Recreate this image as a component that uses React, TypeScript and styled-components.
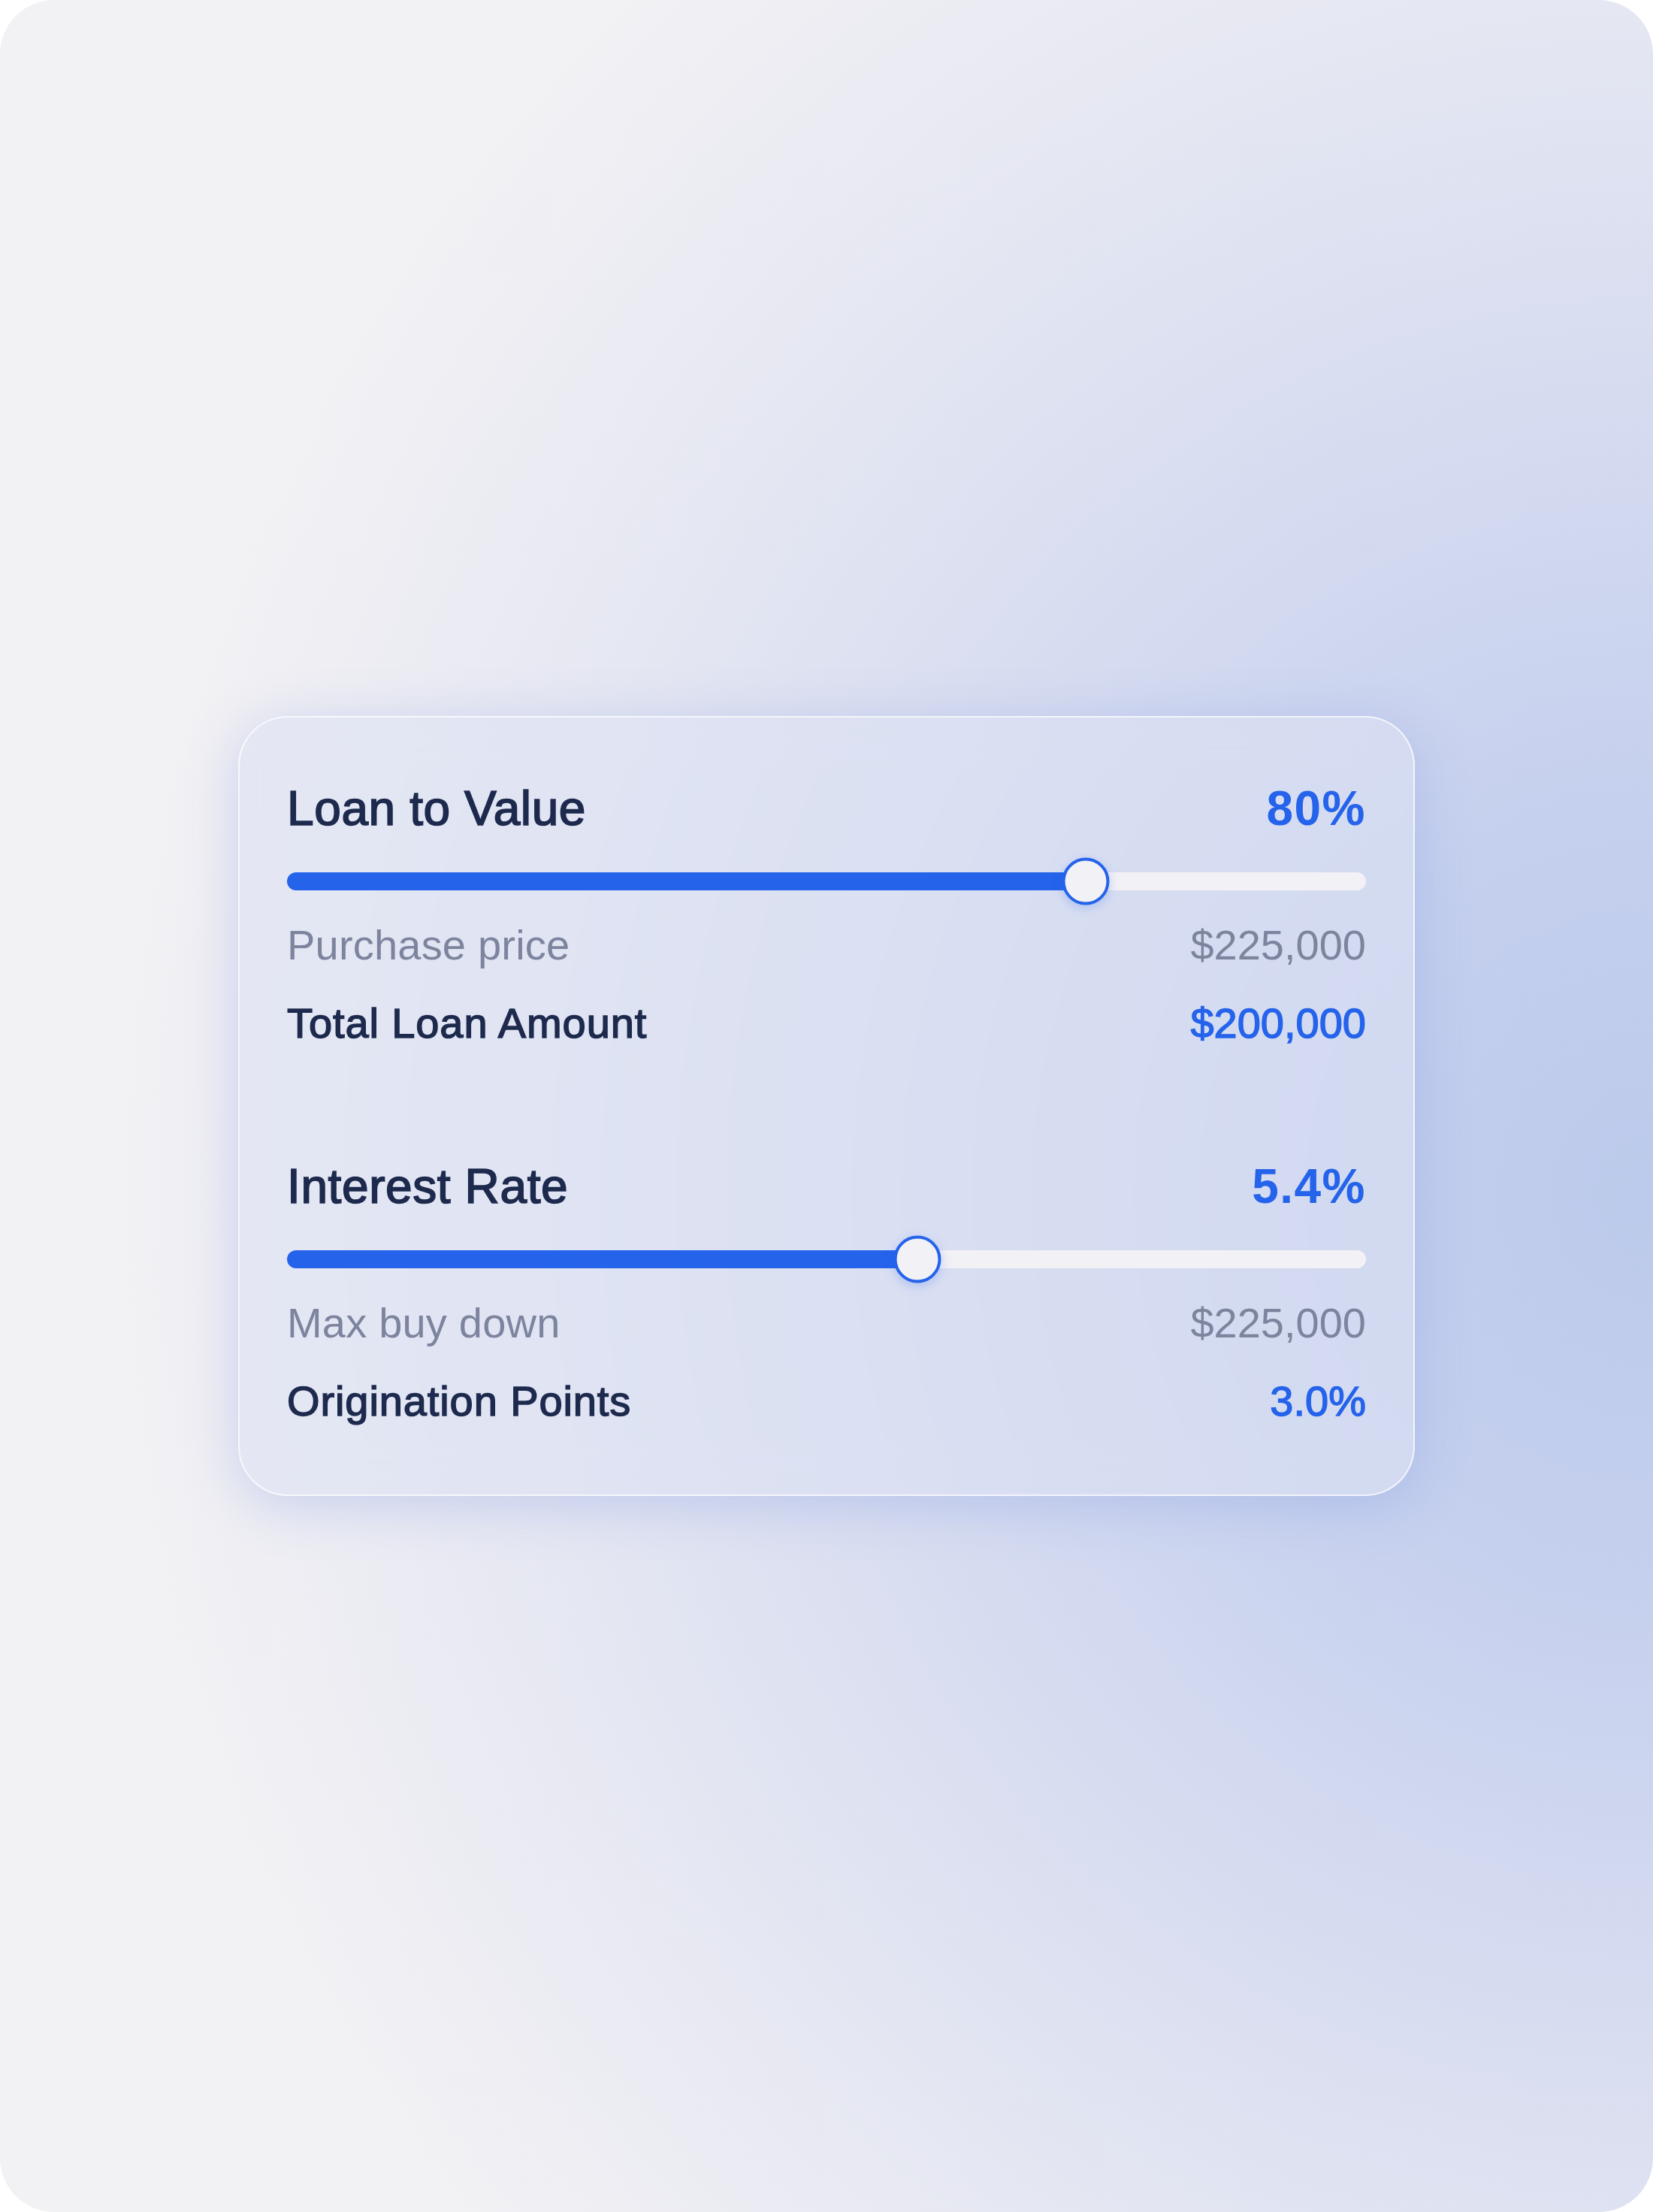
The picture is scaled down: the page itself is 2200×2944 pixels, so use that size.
import styled, { createGlobalStyle } from 'styled-components';

const GlobalStyle = createGlobalStyle`
    html, body {
        margin: 0;
        padding: 0;
        background: #ffffff;
    }

    body {
        font-family: "Liberation Sans", Arial, sans-serif;
    }
`;

const Page = styled.main`
    width: 2200px;
    height: 2944px;
    border-radius: 72px;
    overflow: hidden;
    display: flex;
    align-items: center;
    justify-content: center;
    background:
        radial-gradient(ellipse 2050px 2150px at 100% 54%, #bccaeb 0%, #c5d0ee 24%, #d5dbf0 48%, #e5e7f2 74%, #f2f1f4 100%);
`;

const Card = styled.section`
    width: 1566px;
    box-sizing: border-box;
    padding: 89px 63px 96px;
    border-radius: 66px;
    border: 2px solid rgba(255, 255, 255, 0.7);
    background: rgba(220, 225, 243, 0.58);
    backdrop-filter: blur(30px);
    box-shadow: 0 12px 70px rgba(112, 140, 222, 0.3);
    display: flex;
    flex-direction: column;
    gap: 157px;
`;

const Section = styled.div`
    display: flex;
    flex-direction: column;
`;

const Row = styled.div<{ $top?: number }>`
    display: flex;
    align-items: baseline;
    justify-content: space-between;
    margin-top: ${p => p.$top ?? 0}px;
`;

const Title = styled.h2`
    margin: 0;
    font-size: 64px;
    line-height: 1;
    font-weight: 400;
    letter-spacing: 0.6px;
    color: #1d2a4d;
    -webkit-text-stroke: 1.7px #1d2a4d;
`;

const Figure = styled.span`
    font-size: 64px;
    line-height: 1;
    font-weight: 700;
    letter-spacing: 1.5px;
    color: #2563eb;
`;

const Label = styled.span<{ $strong?: boolean }>`
    font-size: 56px;
    line-height: 1;
    font-weight: 400;
    letter-spacing: ${p => (p.$strong ? '0.9px' : '0.2px')};
    color: ${p => (p.$strong ? '#1d2a4d' : '#7c849e')};
    -webkit-text-stroke: ${p => (p.$strong ? '1.5px #1d2a4d' : '0')};
`;

const Amount = styled.span<{ $accent?: boolean }>`
    font-size: 56px;
    line-height: 1;
    font-weight: 400;
    color: ${p => (p.$accent ? '#2563eb' : '#7c849e')};
    -webkit-text-stroke: ${p => (p.$accent ? '1.4px #2563eb' : '0')};
`;

const SliderWrap = styled.div`
    height: 64px;
    margin: 33px 0 25px;
    display: flex;
    align-items: center;
`;

const Track = styled.div`
    position: relative;
    width: 100%;
    height: 24px;
    border-radius: 12px;
    background: #f2f1f5;
`;

const Fill = styled.div`
    position: absolute;
    left: 0;
    top: 0;
    bottom: 0;
    border-radius: 12px;
    background: #2563eb;
`;

const Thumb = styled.div`
    position: absolute;
    top: 50%;
    width: 63px;
    height: 63px;
    box-sizing: border-box;
    border-radius: 50%;
    border: 4px solid #2563eb;
    background: #f2f1f5;
    transform: translate(-50%, -50%);
    box-shadow: 0 4px 14px rgba(37, 99, 235, 0.25);
`;

type SliderProps = { value: number };

function Slider({ value }: SliderProps) {
    return (
        <SliderWrap>
            <Track>
                <Fill style={{ width: `${value}%` }} />
                <Thumb style={{ left: `${value}%` }} />
            </Track>
        </SliderWrap>
    );
}

const sections = [
    {
        title: 'Loan to Value',
        figure: '80%',
        slider: 74,
        sub: ['Purchase price', '$225,000'],
        main: ['Total Loan Amount', '$200,000'],
    },
    {
        title: 'Interest Rate',
        figure: '5.4%',
        slider: 58.4,
        sub: ['Max buy down', '$225,000'],
        main: ['Origination Points', '3.0%'],
    },
];

function App() {
    return (
        <>
            <GlobalStyle />
            <Page>
                <Card>
                    {sections.map(s => (
                        <Section key={s.title}>
                            <Row>
                                <Title>{s.title}</Title>
                                <Figure>{s.figure}</Figure>
                            </Row>
                            <Slider value={s.slider} />
                            <Row>
                                <Label>{s.sub[0]}</Label>
                                <Amount>{s.sub[1]}</Amount>
                            </Row>
                            <Row $top={48}>
                                <Label $strong>{s.main[0]}</Label>
                                <Amount $accent>{s.main[1]}</Amount>
                            </Row>
                        </Section>
                    ))}
                </Card>
            </Page>
        </>
    );
}

export default App;
